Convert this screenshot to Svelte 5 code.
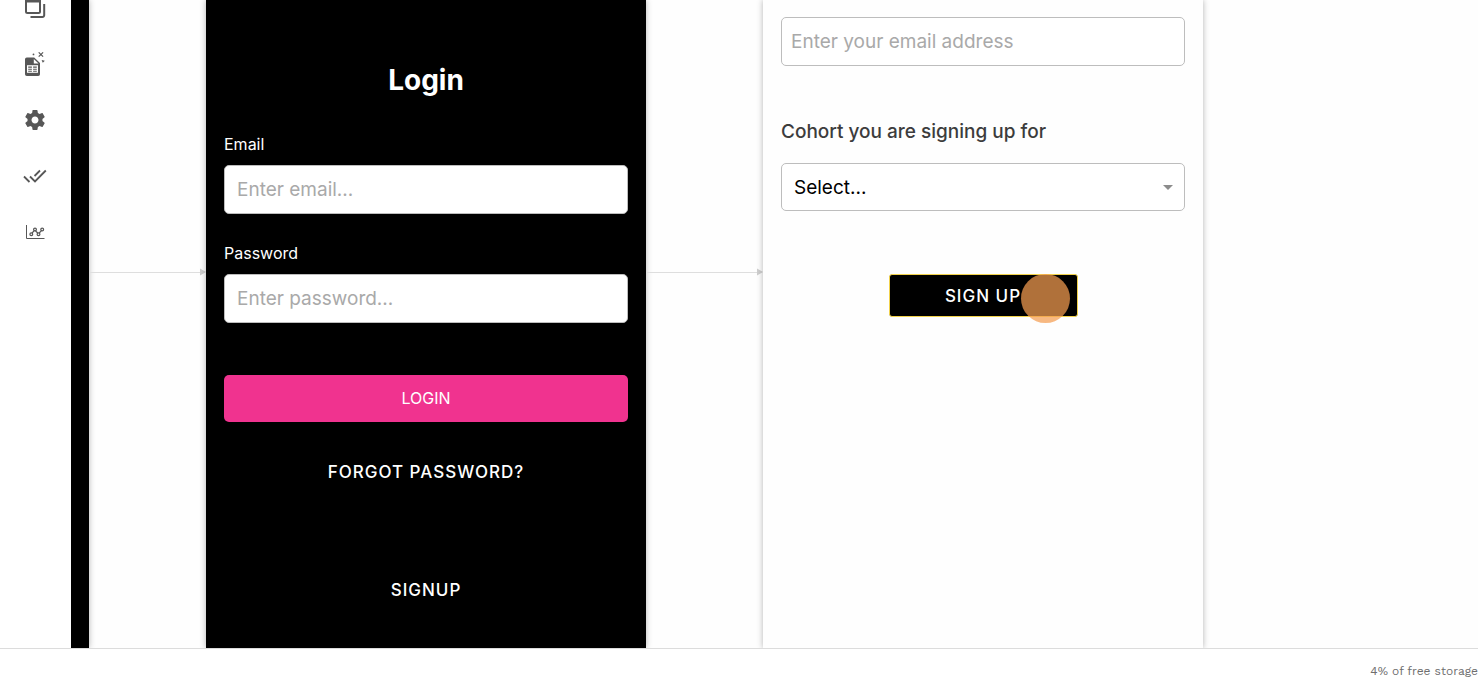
<script lang="ts">
	let email = $state('');
	let password = $state('');
	let signupEmail = $state('');
	let cohort = $state('');

	const cohorts = ['Spring', 'Summer', 'Autumn'];
</script>

{#snippet connector()}
	<div class="connector">
		<span class="connector__line"></span>
		<svg class="connector__head" viewBox="0 0 6 8" aria-hidden="true">
			<path d="M0 0.5 6 4 0 7.5z" fill="currentColor" />
		</svg>
	</div>
{/snippet}

<div class="editor">
	<div class="workspace">
		<nav class="rail" aria-label="Tools">
			<button type="button" aria-label="Screens">
				<svg viewBox="0 0 24 24" fill="none" stroke="currentColor">
					<rect x="3" y="3" width="14" height="14" rx="1.5" stroke-width="2" />
					<path d="M3 5h14" stroke-width="3" />
					<path d="M21.2 8v11.2a1.8 1.8 0 0 1-1.8 1.8H7.5" stroke-width="2" />
				</svg>
			</button>
			<button type="button" aria-label="Data">
				<svg viewBox="0 0 24 24" fill="currentColor">
					<path
						d="M3.8 5.5h7.4l5.8 5.6v11.1a1.8 1.8 0 0 1-1.8 1.8H3.8A1.8 1.8 0 0 1 2 22.200V7.300A1.8 1.8 0 0 1 3.800 5.500z"
					/>
					<path d="M10.800 7v4.500h4.700z" fill="#fff" />
					<path d="M4 13.200h11v7.600H4z" fill="#fff" />
					<path
						d="M5.200 14.400h3.700v1.400H5.200zM10.100 14.400h3.700v1.400h-3.700zM5.200 16.800h3.700v1H5.200zM10.100 16.800h3.700v1h-3.700zM5.200 18.700h3.700v1H5.200zM10.100 18.700h3.700v1h-3.700z"
					/>
					<path
						d="m15.700 .400 4.400 4.200m0-4.200-4.400 4.200"
						fill="none"
						stroke="currentColor"
						stroke-width="1.200"
					/>
					<circle cx="10.500" cy="2.400" r=".9" />
					<path d="m18.600 8 3.200.800-2 1.900z" />
				</svg>
			</button>
			<button type="button" aria-label="Settings">
				<svg viewBox="0 0 24 24" fill="currentColor">
					<path
						d="M19.430 12.980c.040-.320.070-.640.070-.980s-.030-.660-.070-.980l2.110-1.650c.190-.150.240-.420.120-.640l-2-3.460c-.120-.220-.390-.300-.610-.220l-2.490 1c-.520-.400-1.080-.730-1.690-.980l-.380-2.650A.488.488 0 0 0 14 2h-4c-.250 0-.460.180-.490.420l-.380 2.650c-.610.250-1.170.590-1.690.980l-2.490-1c-.230-.090-.490 0-.610.220l-2 3.460c-.130.220-.070.490.120.640l2.110 1.650c-.040.320-.070.650-.070.980s.030.660.070.980l-2.110 1.650c-.190.150-.240.420-.120.640l2 3.460c.120.220.390.300.610.220l2.490-1c.520.400 1.080.730 1.690.980l.380 2.650c.030.240.240.420.490.420h4c.250 0 .460-.180.490-.420l.380-2.650c.610-.250 1.170-.590 1.690-.980l2.490 1c.230.090.490 0 .610-.220l2-3.460c.120-.220.070-.490-.120-.640l-2.110-1.650zM12 15.500c-1.930 0-3.500-1.570-3.500-3.500s1.570-3.500 3.500-3.500 3.500 1.570 3.500 3.500-1.570 3.500-3.500 3.500z"
					/>
				</svg>
			</button>
			<button type="button" aria-label="Checks">
				<svg viewBox="0 0 24 24" fill="none" stroke="currentColor" stroke-width="1.800">
					<path d="m1 12.500 5.500 5.500M7 12.500l5 5L22.800 6.500M11.500 12l5.500-5.500" />
				</svg>
			</button>
			<button type="button" aria-label="Analytics">
				<svg viewBox="0 0 24 24" fill="none" stroke="currentColor" stroke-width="1.200">
					<path d="M3.500 5v13.500h18" stroke-width="1" />
					<circle cx="8.300" cy="14.200" r="1.400" />
					<circle cx="12" cy="9.500" r="1.400" />
					<circle cx="15.500" cy="14.200" r="1.400" />
					<circle cx="19.200" cy="9.500" r="1.400" />
					<path d="m9 13 2.300-2.300M12.500 11l2.300 2M16.200 13l2.300-2.300" />
				</svg>
			</button>
		</nav>

		<main class="canvas">
			<section class="screen screen--edge" aria-label="Welcome screen"></section>
			{@render connector()}

			<section class="screen screen--login">
				<h1>Login</h1>
				<form class="login">
					<label for="email">Email</label>
					<input id="email" type="email" placeholder="Enter email..." bind:value={email} />
					<label for="password">Password</label>
					<input
						id="password"
						type="password"
						placeholder="Enter password..."
						bind:value={password}
					/>
					<button class="login__submit" type="button">LOGIN</button>
				</form>
				<button class="text-button text-button--forgot" type="button">FORGOT PASSWORD?</button>
				<button class="text-button" type="button">SIGNUP</button>
			</section>
			{@render connector()}

			<section class="screen screen--signup">
				<input
					class="signup__email"
					type="email"
					aria-label="Email address"
					placeholder="Enter your email address"
					bind:value={signupEmail}
				/>
				<label for="cohort">Cohort you are signing up for</label>
				<div class="select">
					<select id="cohort" bind:value={cohort}>
						<option value="">Select...</option>
						{#each cohorts as name}
							<option value={name}>{name}</option>
						{/each}
					</select>
					<svg class="select__arrow" viewBox="0 0 10 5" aria-hidden="true">
						<path d="M0 0h10L5 5z" fill="currentColor" />
					</svg>
				</div>
				<button class="signup__submit" type="button">
					SIGN UP
					<span class="pointer"></span>
				</button>
			</section>
		</main>
	</div>

	<footer>4% of free storage</footer>
</div>

<style>
	:global(body) {
		margin: 0;
		background: #fff;
	}

	.editor {
		display: flex;
		flex-direction: column;
		height: 100vh;
		overflow: hidden;
		font-family: Inter, 'Liberation Sans', sans-serif;
	}

	.editor * {
		box-sizing: border-box;
	}

	button,
	input,
	select {
		margin: 0;
		font-family: inherit;
	}

	.workspace {
		display: flex;
		flex: 1;
		min-height: 0;
		overflow: hidden;
	}

	.rail {
		display: flex;
		flex: none;
		flex-direction: column;
		align-items: center;
		gap: 32px;
		width: 71px;
		margin-top: -4px;
		padding-right: 1px;
	}

	.rail button {
		width: 24px;
		height: 24px;
		padding: 0;
		border: 0;
		background: none;
		color: #575757;
	}

	.rail svg {
		display: block;
		width: 24px;
		height: 24px;
	}

	.canvas {
		display: flex;
		flex: 1;
		min-width: 0;
		background: #fefefe;
		overflow: hidden;
	}

	.screen {
		display: flex;
		flex: 0 0 440px;
		flex-direction: column;
		padding: 0 18px;
		box-shadow: 0 0 6px rgb(0 0 0 / 0.3);
	}

	.screen--edge {
		flex-basis: 18px;
		padding: 0;
		background: #000;
	}

	.screen--login {
		padding-top: 60px;
		background: #000;
		color: #fff;
	}

	.screen--signup {
		padding-top: 17px;
		background: #fefefe;
	}

	.connector {
		display: flex;
		flex: 0 0 117px;
		align-items: center;
		height: 8px;
		margin-top: 268px;
		color: #cfcfcf;
	}

	.connector__line {
		flex: 1;
		height: 1px;
		background: #dedede;
	}

	.connector__head {
		width: 6px;
		height: 8px;
	}

	h1 {
		margin: 0;
		font-size: 28px;
		line-height: 40px;
		font-weight: 700;
		text-align: center;
	}

	.login {
		display: flex;
		flex-direction: column;
		margin-top: 32px;
	}

	.login label {
		margin-bottom: 9px;
		font-size: 16px;
		line-height: 24px;
	}

	input,
	select {
		display: block;
		width: 100%;
		height: 49px;
		padding: 0 12px;
		border: 1px solid #bdbdbd;
		border-radius: 5px;
		background: #fff;
		color: #000;
		font-size: 19px;
	}

	input::placeholder {
		color: #a9a9a9;
		opacity: 1;
	}

	.login input {
		margin-bottom: 27px;
	}

	.login__submit {
		height: 47px;
		margin-top: 25px;
		padding: 0 0 2px;
		border: 0;
		border-radius: 5px;
		background: #f0338f;
		color: #fff;
		font-size: 16px;
	}

	.text-button {
		align-self: center;
		height: 40px;
		padding: 0;
		border: 0;
		background: none;
		color: #fff;
		font-size: 17px;
		font-weight: 500;
		letter-spacing: 1px;
	}

	.text-button--forgot {
		margin: 30px 0 78px;
	}

	.signup__email {
		padding: 0 9px;
	}

	.screen--signup label {
		margin: 51px 0 17px;
		color: #3c3c3c;
		font-size: 19px;
		line-height: 29px;
		font-weight: 500;
	}

	.select {
		position: relative;
	}

	select {
		height: 48px;
		appearance: none;
	}

	.select__arrow {
		position: absolute;
		top: 22px;
		right: 12px;
		width: 10px;
		height: 5px;
		color: #8c8c8c;
		pointer-events: none;
	}

	.signup__submit {
		position: relative;
		align-self: center;
		width: 189px;
		height: 43px;
		margin-top: 63px;
		padding: 0;
		border: 1px solid #f2d24b;
		border-radius: 3px;
		background: #000;
		color: #fff;
		font-size: 17px;
		font-weight: 500;
		letter-spacing: 1px;
	}

	/* tap marker resting on the button */
	.pointer {
		position: absolute;
		top: -1px;
		right: 7px;
		width: 49px;
		height: 49px;
		border-radius: 50%;
		background: rgb(244 157 80 / 0.72);
	}

	footer {
		flex: none;
		height: 45px;
		border-top: 1px solid #dcdcdc;
		color: #6e6e6e;
		font-family: 'Work Sans', Inter, sans-serif;
		font-size: 12px;
		line-height: 44px;
		text-align: right;
	}
</style>
